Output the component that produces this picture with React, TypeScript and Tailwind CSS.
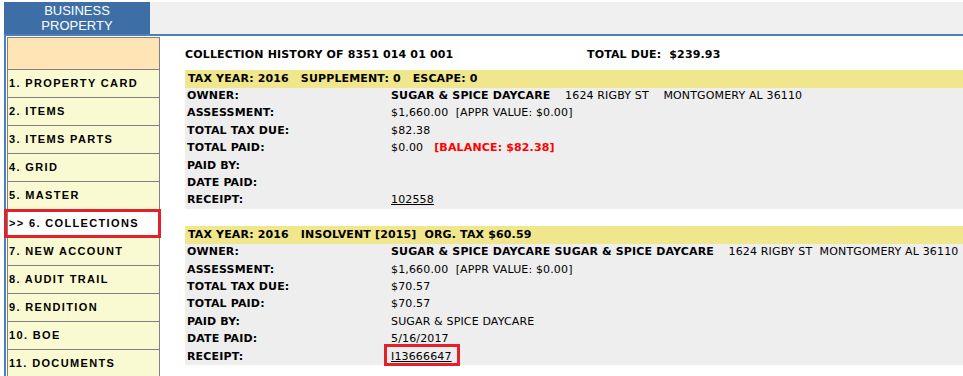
import type { ReactNode } from 'react'

// =====================================================================
// DATA
// =====================================================================
const MENU = [
  '1. PROPERTY CARD',
  '2. ITEMS',
  '3. ITEMS PARTS',
  '4. GRID',
  '5. MASTER',
  '>> 6. COLLECTIONS',
  '7. NEW ACCOUNT',
  '8. AUDIT TRAIL',
  '9. RENDITION',
  '10. BOE',
  '11. DOCUMENTS',
]

const ACTIVE = 5

// =====================================================================
// PIECES
// =====================================================================
function Row({ label, children }: { label: string; children?: ReactNode }) {
  return (
    <div className="flex h-[17.4px] items-center">
      <div className="w-[206px] shrink-0 pl-[2px] font-bold">{label}</div>
      <div className="relative whitespace-pre">{children}</div>
    </div>
  )
}

function Block({ header, children }: { header: string; children: ReactNode }) {
  return (
    <div>
      <div className="flex h-[17.5px] items-center bg-[#f0e68c] pl-[3px] font-bold whitespace-pre">
        {header}
      </div>
      <div className="bg-[#eeeeee]">{children}</div>
    </div>
  )
}

export default function App() {
  return (
    <div
      className="relative h-[376px] w-[963px] overflow-hidden bg-white text-black"
      style={{ fontFamily: '"DejaVu Sans", Verdana, sans-serif' }}
    >
      {/* Top bar */}
      <div className="flex h-[34px] pt-[2px]">
        <div
          className="ml-[4px] flex w-[146px] flex-col items-center justify-center bg-[#3e6ea6] text-[13px] leading-[15px] text-white"
          style={{ fontFamily: '"Liberation Sans", Arial, sans-serif' }}
        >
          <span>BUSINESS</span>
          <span>PROPERTY</span>
        </div>
        <div className="flex-1 bg-[#f0f0f0]" />
      </div>
      <div className="ml-[4px] h-[2px] bg-[#4b80b8]" />

      <div className="ml-[4px] flex border-l-2 border-[#4b80b8] pl-[1px]">
        {/* Sidebar */}
        <div
          className="mt-[1px] w-[153px] shrink-0 border border-b-0 border-[#808080] text-[11px] font-bold tracking-[1.35px]"
          style={{ fontFamily: '"Liberation Sans", Arial, sans-serif' }}
        >
          <div className="h-[31px] bg-[#ffe4b5]" />
          {MENU.map((item, i) => (
            <div
              key={item}
              className={
                i === ACTIVE
                  ? 'relative flex h-[28px] items-center border-t border-[#808080] bg-white pl-[1px]'
                  : 'flex h-[28px] items-center border-t border-[#808080] bg-[#fafad2] pl-[1px]'
              }
            >
              {item}
              {i === ACTIVE && (
                <div className="absolute -top-[1px] -left-[4px] -right-[2px] h-[29px] border-[3px] border-[#e3212b]" />
              )}
            </div>
          ))}
        </div>

        {/* Main */}
        <div className="flex-1 pl-[25px] text-[11px] tracking-[0.15px]">
          <div className="flex h-[34px] items-center pt-[4px] font-bold">
            <div className="w-[402px]">COLLECTION HISTORY OF 8351 014 01 001</div>
            <div className="whitespace-pre">TOTAL DUE:  $239.93</div>
          </div>

          <Block header="TAX YEAR: 2016   SUPPLEMENT: 0   ESCAPE: 0">
            <Row label="OWNER:">
              <b>SUGAR &amp; SPICE DAYCARE</b>
              {'    1624 RIGBY ST    MONTGOMERY AL 36110'}
            </Row>
            <Row label="ASSESSMENT:">{'$1,660.00  [APPR VALUE: $0.00]'}</Row>
            <Row label="TOTAL TAX DUE:">$82.38</Row>
            <Row label="TOTAL PAID:">
              {'$0.00   '}
              <b className="text-[#ff0000]">[BALANCE: $82.38]</b>
            </Row>
            <Row label="PAID BY:" />
            <Row label="DATE PAID:" />
            <Row label="RECEIPT:">
              <span className="underline">102558</span>
            </Row>
          </Block>

          <div className="h-[17px]" />

          <Block header="TAX YEAR: 2016   INSOLVENT [2015]  ORG. TAX $60.59">
            <Row label="OWNER:">
              <b>SUGAR &amp; SPICE DAYCARE SUGAR &amp; SPICE DAYCARE</b>
              {'    1624 RIGBY ST  MONTGOMERY AL 36110'}
            </Row>
            <Row label="ASSESSMENT:">{'$1,660.00  [APPR VALUE: $0.00]'}</Row>
            <Row label="TOTAL TAX DUE:">$70.57</Row>
            <Row label="TOTAL PAID:">$70.57</Row>
            <Row label="PAID BY:">SUGAR &amp; SPICE DAYCARE</Row>
            <Row label="DATE PAID:">5/16/2017</Row>
            <Row label="RECEIPT:">
              <span className="underline">I13666647</span>
              <div className="absolute -top-[5px] -left-[7px] -right-[8px] h-[22px] border-[3px] border-[#e3212b]" />
            </Row>
          </Block>
        </div>
      </div>
    </div>
  )
}
